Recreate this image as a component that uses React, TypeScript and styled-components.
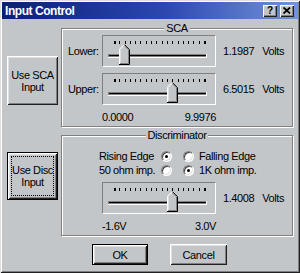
import React from 'react';
import styled, { createGlobalStyle } from 'styled-components';

const FACE = '#c3c6c9';
const SHADOW = '#808080';
const DARK = '#202020';
const HILITE = '#ffffff';
const SOFT = '#dfdfdf';

const GlobalStyle = createGlobalStyle`
  html, body {
    margin: 0;
    padding: 0;
    background: ${FACE};
  }
  body {
    font-family: 'Liberation Sans', Arial, sans-serif;
    font-size: 11px;
    letter-spacing: -0.4px;
    color: #000;
  }
`;

const Window = styled.div`
  box-sizing: border-box;
  width: 300px;
  height: 273px;
  padding: 2px;
  background: ${FACE};
  box-shadow: inset 1px 1px ${SOFT}, inset -1px -1px ${DARK},
    inset 2px 2px ${HILITE}, inset -2px -2px ${SHADOW};
  display: flex;
  flex-direction: column;
`;

const TitleBar = styled.div`
  height: 17px;
  display: flex;
  align-items: center;
  padding: 0 4px 0 3px;
  background: linear-gradient(to right, #0a1f78 0%, #2b48b0 55%, #7393da 100%);
`;

const TitleText = styled.span`
  color: #fff;
  font-weight: bold;
  font-size: 12px;
  letter-spacing: -0.45px;
`;

const CaptionButtons = styled.div`
  margin-left: auto;
  display: flex;
  gap: 3px;
`;

const CaptionButton = styled.div`
  box-sizing: border-box;
  width: 14px;
  height: 12px;
  background: ${FACE};
  box-shadow: inset 1px 1px ${HILITE}, inset -1px -1px ${DARK},
    inset -2px -2px ${SHADOW};
  display: flex;
  align-items: center;
  justify-content: center;
  font-weight: bold;
  font-size: 10px;
  line-height: 10px;
  letter-spacing: 0;
`;

const Body = styled.div`
  display: grid;
  grid-template-columns: 51px 232px;
  column-gap: 3px;
  row-gap: 2px;
  padding: 3px 0 0 5px;
`;

const Button = styled.button<{ $width?: number; $height: number; $default?: boolean }>`
  box-sizing: border-box;
  width: ${(p) => (p.$width ? `${p.$width}px` : '100%')};
  height: ${(p) => p.$height}px;
  margin: 0;
  padding: 0;
  border: ${(p) => (p.$default ? `1px solid #000` : 'none')};
  background: ${FACE};
  box-shadow: inset 1px 1px ${HILITE}, inset -1px -1px ${DARK},
    inset 2px 2px ${SOFT}, inset -2px -2px ${SHADOW};
  font: inherit;
  letter-spacing: inherit;
  line-height: 12px;
  color: #000;
  display: flex;
  align-items: center;
  justify-content: center;
  text-align: center;
`;

const SideButton = styled(Button)<{ $top: number }>`
  align-self: start;
  margin-top: ${(p) => p.$top}px;
`;

const FocusRing = styled.span`
  box-sizing: border-box;
  width: calc(100% - 6px);
  height: calc(100% - 6px);
  border: 1px dotted #000;
  display: flex;
  align-items: center;
  justify-content: center;
`;

const Caption = styled.span`
  display: block;
  white-space: nowrap;
  text-align: center;
`;

const Group = styled.fieldset`
  margin: 0;
  padding: 1px 6px 3px 6px;
  min-width: 0;
  border: 1px solid ${SHADOW};
  box-shadow: inset 1px 1px ${HILITE}, 1px 1px ${HILITE};
`;

const Legend = styled.legend`
  margin: 0 auto;
  padding: 0 2px;
  line-height: 12px;
  background: ${FACE};
`;

const SliderGrid = styled.div<{ $top?: number }>`
  display: grid;
  grid-template-columns: 27px 114px auto;
  column-gap: 7px;
  row-gap: 6px;
  align-items: center;
  margin-top: ${(p) => p.$top ?? 0}px;
`;

const RowLabel = styled.span`
  line-height: 12px;
`;

const Value = styled.span`
  line-height: 12px;
  white-space: nowrap;
`;

const Unit = styled.span`
  margin-left: 8px;
`;

const Scale = styled.div`
  grid-column: 2;
  display: flex;
  justify-content: space-between;
  line-height: 12px;
`;

const SliderBox = styled.div`
  position: relative;
  box-sizing: border-box;
  width: 114px;
  height: 32px;
  border: 1px solid;
  border-color: ${SHADOW} ${HILITE} ${HILITE} ${SHADOW};
`;

const Thumb = styled.svg`
  position: absolute;
  top: 8px;
  display: block;
`;

const RadioBlock = styled.div`
  margin: 7px 0 0 31px;
`;

const RadioRow = styled.div`
  display: flex;
  align-items: center;
  height: 14px;
`;

const RadioLabel = styled.span`
  width: 62px;
`;

const Radio = styled.span<{ $checked?: boolean; $gap?: number }>`
  box-sizing: border-box;
  width: 11px;
  height: 11px;
  margin-left: ${(p) => p.$gap ?? 0}px;
  border-radius: 50%;
  border: 1px solid;
  border-color: ${SHADOW} ${HILITE} ${HILITE} ${SHADOW};
  background: #fff;
  box-shadow: inset 1px 1px #404040, inset -1px -1px ${SOFT};
  display: flex;
  align-items: center;
  justify-content: center;

  &::after {
    content: '';
    width: 3px;
    height: 3px;
    border-radius: 50%;
    background: #000;
    display: ${(p) => (p.$checked ? 'block' : 'none')};
  }
`;

const RadioText = styled.span`
  margin-left: 5px;
`;

const Footer = styled.div`
  display: flex;
  gap: 22px;
  padding-left: 90px;
  margin-top: 8px;
`;

const TICKS = 18;

const Slider: React.FC<{ value: number; min: number; max: number }> = ({ value, min, max }) => {
  const frac = (value - min) / (max - min);
  const left = Math.round(11 + frac * 90 - 5.5);
  const ticks = Array.from({ length: TICKS }, (_, i) => Math.round(11 + (i * 90) / (TICKS - 1)));
  return (
    <SliderBox>
      <svg width="112" height="30" style={{ display: 'block' }}>
        {ticks.map((x, i) => (
          <rect
            key={i}
            x={x}
            y={5}
            width={i === 0 || i === TICKS - 1 ? 2 : 1}
            height={3}
            fill="#000"
          />
        ))}
        <rect x={5} y={18} width={99} height={4} fill="#fff" />
        <rect x={5} y={18} width={98} height={3} fill={SHADOW} />
        <rect x={6} y={19} width={97} height={1} fill="#000" />
      </svg>
      <Thumb width="11" height="21" style={{ left }}>
        <polygon points="0,5 5,0 10,5 10,20 0,20" fill={FACE} />
        <polyline points="0.5,20 0.5,5.2 5.5,0.2" fill="none" stroke="#fff" />
        <polyline points="1.5,19 1.5,5.6 5.5,1.6" fill="none" stroke={SOFT} />
        <polyline points="5.5,0.7 10.5,5.7 10.5,20.5 0,20.5" fill="none" stroke="#000" />
        <polyline points="5.5,1.9 9.5,5.9 9.5,19.5 1,19.5" fill="none" stroke={SHADOW} />
      </Thumb>
    </SliderBox>
  );
};

const App: React.FC = () => {
  return (
    <>
      <GlobalStyle />
      <Window>
        <TitleBar>
          <TitleText>Input Control</TitleText>
          <CaptionButtons>
            <CaptionButton>?</CaptionButton>
            <CaptionButton>
              <svg width="8" height="7" viewBox="0 0 8 7">
                <path d="M0.5 0.5 L7 6.5 M7 0.5 L0.5 6.5" stroke="#000" strokeWidth="1.8" />
              </svg>
            </CaptionButton>
          </CaptionButtons>
        </TitleBar>

        <Body>
          <SideButton $top={34} $height={49}>
            <Caption>
              Use SCA
              <br />
              Input
            </Caption>
          </SideButton>
          <Group>
            <Legend>SCA</Legend>
            <SliderGrid>
              <RowLabel>Lower:</RowLabel>
              <Slider value={1.1987} min={0} max={9.9976} />
              <Value>
                1.1987<Unit>Volts</Unit>
              </Value>
              <RowLabel>Upper:</RowLabel>
              <Slider value={6.5015} min={0} max={9.9976} />
              <Value>
                6.5015<Unit>Volts</Unit>
              </Value>
              <Scale>
                <span>0.0000</span>
                <span>9.9976</span>
              </Scale>
            </SliderGrid>
          </Group>

          <SideButton $top={23} $height={48} $default>
            <FocusRing>
              <Caption>
                Use Disc
                <br />
                Input
              </Caption>
            </FocusRing>
          </SideButton>
          <Group>
            <Legend>Discriminator</Legend>
            <RadioBlock>
              <RadioRow>
                <RadioLabel>Rising Edge</RadioLabel>
                <Radio $checked />
                <Radio $gap={11} />
                <RadioText>Falling Edge</RadioText>
              </RadioRow>
              <RadioRow>
                <RadioLabel>50 ohm imp.</RadioLabel>
                <Radio />
                <Radio $gap={11} $checked />
                <RadioText>1K ohm imp.</RadioText>
              </RadioRow>
            </RadioBlock>
            <SliderGrid $top={5}>
              <span />
              <Slider value={1.4008} min={-1.6} max={3.0} />
              <Value>
                1.4008<Unit>Volts</Unit>
              </Value>
              <Scale>
                <span>-1.6V</span>
                <span>3.0V</span>
              </Scale>
            </SliderGrid>
          </Group>
        </Body>

        <Footer>
          <Button $width={56} $height={21} $default>
            OK
          </Button>
          <Button $width={57} $height={21}>
            Cancel
          </Button>
        </Footer>
      </Window>
    </>
  );
};

export default App;
